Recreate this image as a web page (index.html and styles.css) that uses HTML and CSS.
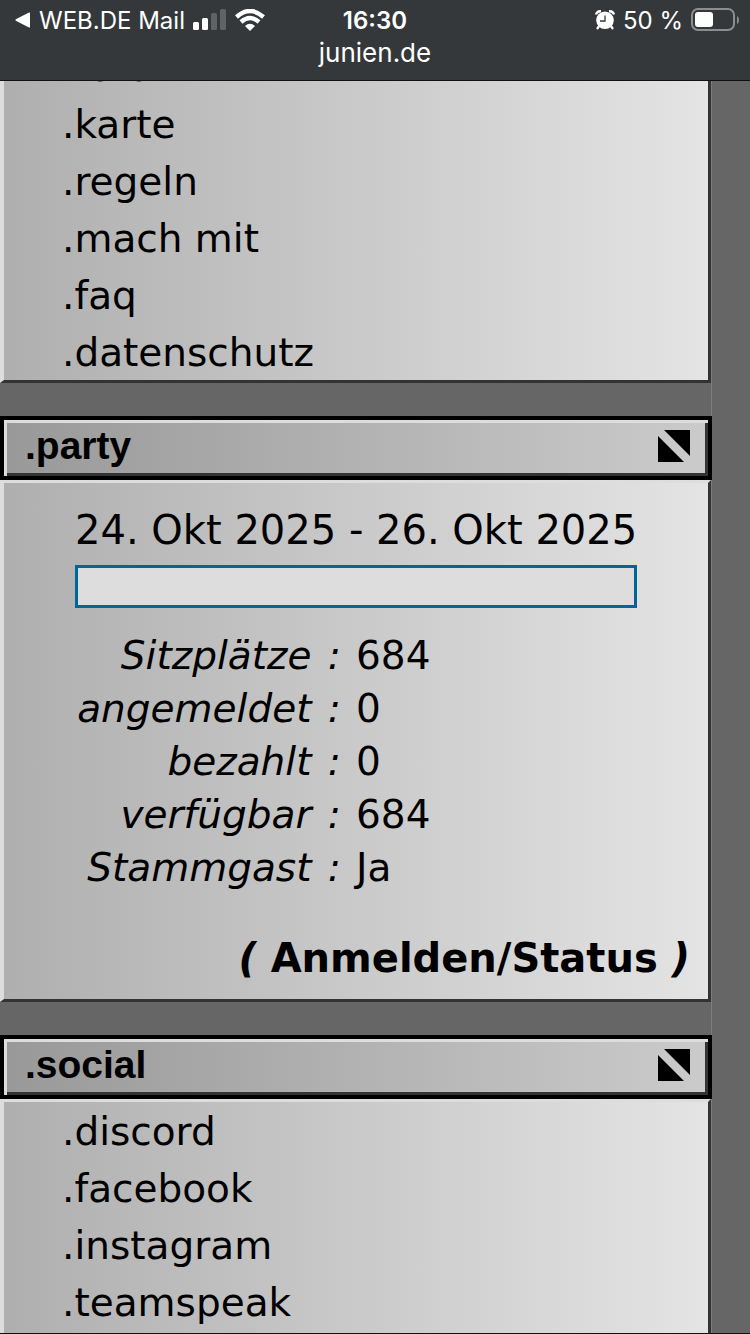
FILE: index.html
```html
<!DOCTYPE html>
<html lang="de">
<head>
    <meta charset="UTF-8">
    <meta name="viewport" content="width=device-width, initial-scale=1.0">
    <title>junien.de</title>
    <link rel="stylesheet" href="styles.css">
</head>
<body>
    <header class="statusbar">
        <div class="status-row">
            <div class="status-left">
                <svg width="16" height="16" viewBox="0 0 16 16" aria-hidden="true"><path d="M15 1v14Q15 16 13.500 15.200L.8 8.800Q0 8 .8 7.200L13.500.8Q15 0 15 1z" fill="#fff"/></svg>
                <a href="#" class="back-app">WEB.DE Mail</a>
                <svg class="signal" width="34" height="22" viewBox="0 0 34 22" aria-hidden="true">
                    <rect x="0" y="13" width="6" height="8" rx="1.500" fill="#fff"/>
                    <rect x="9" y="9" width="6" height="12" rx="1.500" fill="#fff"/>
                    <rect x="18" y="4" width="6" height="17" rx="1.500" fill="#606365"/>
                    <rect x="27" y="0" width="6" height="21" rx="1.500" fill="#606365"/>
                </svg>
                <svg width="30" height="22" viewBox="0 0 30 22" aria-hidden="true">
                    <path d="M1.500 8Q15-4 28.500 8" fill="none" stroke="#fff" stroke-width="4.400"/>
                    <path d="M6 13Q15 5 24 13" fill="none" stroke="#fff" stroke-width="4.400"/>
                    <path d="M10 17Q15 12.500 20 17L15 22z" fill="#fff"/>
                </svg>
            </div>
            <time class="clock">16:30</time>
            <div class="status-right">
                <svg width="20" height="20" viewBox="0 0 20 20" aria-hidden="true">
                    <path d="M1 4.500Q2 1 6 1.200M19 4.500Q18 1 14 1.200" fill="none" stroke="#fff" stroke-width="2.400"/>
                    <path d="M4.500 15.500l-2.500 3.500M15.500 15.500l2.500 3.500" stroke="#fff" stroke-width="2.200"/>
                    <circle cx="10" cy="10.300" r="8.800" fill="#fff"/>
                    <path d="M10 5.500v5.500H5" fill="none" stroke="#34383a" stroke-width="1.300"/>
                </svg>
                <span>50 %</span>
                <svg width="48" height="24" viewBox="0 0 48 24" aria-hidden="true">
                    <rect x="1" y="1" width="42" height="21" rx="6" fill="none" stroke="#8b8d8f" stroke-width="2"/>
                    <rect x="4" y="4" width="18" height="15" rx="3" fill="#fff"/>
                    <path d="M46 8q2 1 2 4t-2 4z" fill="#8b8d8f"/>
                </svg>
            </div>
        </div>
        <div class="address">junien.de</div>
    </header>

    <main class="page">
        <div class="sidebar">
            <nav class="panel panel-scrolled">
                <ul class="menu">
                    <li><a href="#">.forum</a></li>
                    <li><a href="#">.karte</a></li>
                    <li><a href="#">.regeln</a></li>
                    <li><a href="#">.mach mit</a></li>
                    <li><a href="#">.faq</a></li>
                    <li><a href="#">.datenschutz</a></li>
                </ul>
            </nav>

            <section class="box">
                <div class="box-title">
                    <h2>.party</h2>
                    <button type="button" class="toggle" aria-label="party einklappen">
                        <svg width="33" height="32" viewBox="0 0 33 32"><path d="M0 6L26 32H0zM6 0H32V26z" fill="#000"/></svg>
                    </button>
                </div>
                <div class="panel party">
                    <p class="date">24. Okt 2025 - 26. Okt 2025</p>
                    <div class="bar" role="progressbar" aria-label="Belegung" aria-valuenow="0"></div>
                    <table class="stats">
                        <tr><th scope="row">Sitzplätze <span class="colon">:</span></th><td>684</td></tr>
                        <tr><th scope="row">angemeldet <span class="colon">:</span></th><td>0</td></tr>
                        <tr><th scope="row">bezahlt <span class="colon">:</span></th><td>0</td></tr>
                        <tr><th scope="row">verfügbar <span class="colon">:</span></th><td>684</td></tr>
                        <tr><th scope="row">Stammgast <span class="colon">:</span></th><td>Ja</td></tr>
                    </table>
                    <p class="signup"><i>(</i> <a href="#">Anmelden/Status</a> <i>)</i></p>
                </div>
            </section>

            <section class="box box-last">
                <div class="box-title">
                    <h2>.social</h2>
                    <button type="button" class="toggle" aria-label="social einklappen">
                        <svg width="33" height="32" viewBox="0 0 33 32"><path d="M0 6L26 32H0zM6 0H32V26z" fill="#000"/></svg>
                    </button>
                </div>
                <nav class="panel">
                    <ul class="menu">
                        <li><a href="#">.discord</a></li>
                        <li><a href="#">.facebook</a></li>
                        <li><a href="#">.instagram</a></li>
                        <li><a href="#">.teamspeak</a></li>
                    </ul>
                </nav>
            </section>
        </div>
    </main>
</body>
</html>
```

FILE: styles.css
```css
* {
    margin: 0;
    padding: 0;
    box-sizing: border-box;
}

body {
    display: flex;
    flex-direction: column;
    height: 100vh;
    overflow: hidden;
    background: #666;
    color: #000;
    font-family: Verdana, "DejaVu Sans", sans-serif;
    font-size: 39px;
    border-bottom: 1px solid #111;
}

a {
    color: inherit;
    text-decoration: none;
}

/* Statusleiste */
.statusbar {
    flex: none;
    padding-top: 4px;
    background: #34383a;
    border-bottom: 1px solid #111;
    color: #fff;
    font-family: Inter, sans-serif;
    font-size: 24px;
}

.status-row {
    display: grid;
    grid-template-columns: 1fr auto 1fr;
    align-items: center;
    height: 32px;
    padding: 0 11px 0 15px;
}

.status-left,
.status-right {
    display: flex;
    align-items: center;
    gap: 8px;
}

.status-right {
    justify-content: flex-end;
}

.clock {
    padding-right: 4px;
    font-weight: 600;
}

.address {
    height: 44px;
    line-height: 34px;
    font-size: 26px;
    text-align: center;
}

/* Spalte */
.page {
    flex: 1;
    min-height: 0;
    overflow: hidden;
    padding-right: 38px;
}

.sidebar {
    display: flex;
    flex-direction: column;
    gap: 33px;
    min-height: 100%;
    border-right: 1px solid #7d7d7d;
}

.panel {
    border: 3px solid;
    border-color: #ddd #333 #333 #ddd;
    border-left-width: 4px;
    background: linear-gradient(to right, #afafaf, #e4e4e4);
}

.panel-scrolled {
    margin-top: -46px;
}

.menu {
    list-style: none;
    padding-left: 58px;
    line-height: 55px;
}

.menu li {
    padding-top: 2px;
}

/* Box mit Titel */
.box-title {
    display: flex;
    align-items: center;
    justify-content: space-between;
    height: 64px;
    margin-right: -1px;
    padding: 0 17px 4px 21px;
    border: 4px solid #000;
    box-shadow: inset 3px 3px #ddd, inset -3px -3px #333;
    background: linear-gradient(to right, #999, #cbcbcb);
}

.box-title h2 {
    font-family: Arial, "Liberation Sans", sans-serif;
    font-size: 39px;
    line-height: 44px;
}

.toggle {
    display: flex;
    border: none;
    background: none;
    cursor: pointer;
}

.box-last {
    display: flex;
    flex: 1;
    flex-direction: column;
}

.box-last .panel {
    flex: 1;
    border-bottom: none;
}

/* Party */
.party {
    padding: 20px 18px 14px 71px;
}

.date {
    line-height: 54px;
    font-size: 40px;
    white-space: nowrap;
}

.bar {
    height: 43px;
    margin: 8px 53px 21px 0;
    border: 3px solid #069;
    background: #ddd;
}

.stats {
    border-collapse: collapse;
    line-height: 53px;
}

.stats th {
    width: 266px;
    font-style: italic;
    font-weight: normal;
    text-align: right;
}

.stats td {
    padding-left: 15px;
}

.colon {
    margin-left: 4px;
}

.signup {
    margin-top: 37px;
    line-height: 54px;
    font-size: 40px;
    font-weight: bold;
    text-align: right;
}
```
